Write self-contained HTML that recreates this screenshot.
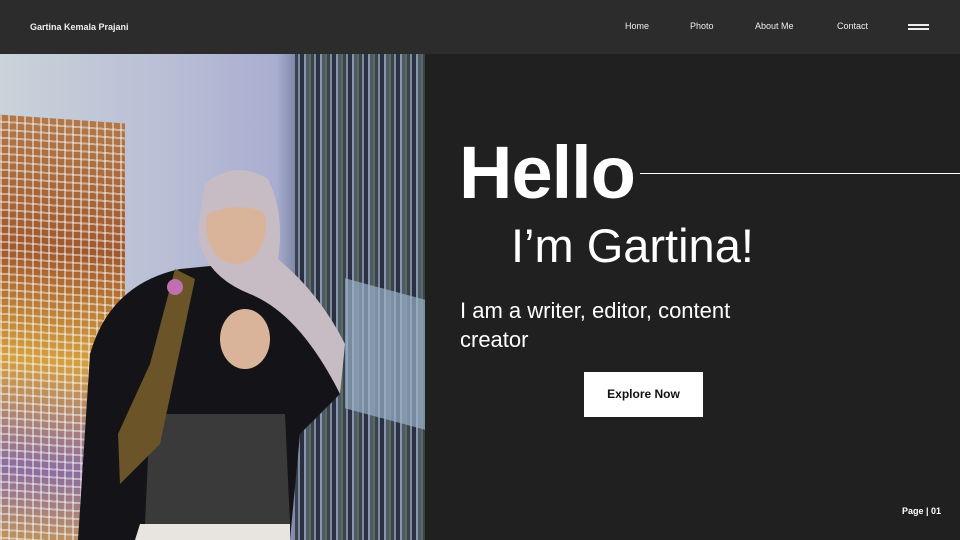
<!DOCTYPE html><html><head><style>
*{margin:0;padding:0;box-sizing:border-box}
body{width:960px;height:540px;overflow:hidden;background:#202020;font-family:"Liberation Sans",sans-serif;position:relative}
.hdr{position:absolute;left:0;top:0;width:960px;height:54px;background:#2c2c2c;color:#eee}
.hdr span{position:absolute;top:21px;font-size:9px}
.photo{position:absolute;left:0;top:54px;width:425px;height:486px;overflow:hidden;background:linear-gradient(90deg,#c9d3d8 0%,#b9bed6 40%,#a9aed0 65%,#6a7390 72%,#4a5068 100%)}
.mosaic{position:absolute;left:0;top:65px;width:125px;height:440px;transform:skewY(4deg);
background:repeating-linear-gradient(90deg,rgba(255,255,255,.45) 0 2px,transparent 2px 8px),repeating-linear-gradient(0deg,rgba(255,255,255,.45) 0 2px,transparent 2px 8px),
linear-gradient(180deg,#b0784a,#a0582e 30%,#d4a040 55%,#8b6ca0 80%,#c89a50)}
.streak{position:absolute;left:295px;top:0;width:130px;height:486px;background:repeating-linear-gradient(90deg,#3a4250 0 3px,#7c8aa0 3px 5px,#2a3040 5px 9px,#8a96a8 9px 11px,#4a5a6c 11px 14px,#5c6a58 14px 16px)}
</style></head><body>
<div class="hdr"><span style="left:30px;font-weight:bold;top:22px;font-size:9px">Gartina Kemala Prajani</span>
<span style="left:625px">Home</span><span style="left:690px">Photo</span><span style="left:755px">About Me</span><span style="left:837px">Contact</span>
<div style="position:absolute;left:908px;top:24px;width:21px;height:2px;background:#eee"></div>
<div style="position:absolute;left:908px;top:28px;width:21px;height:2px;background:#eee"></div></div>
<div class="photo">
<div class="mosaic"></div>
<div class="streak"></div>
<div style="position:absolute;left:345px;top:235px;width:80px;height:130px;background:#9ab0c8;transform:skewY(15deg);opacity:.7"></div>
<svg width="425" height="486" style="position:absolute;left:0;top:0">
<path d="M78 486 L90 300 Q110 230 180 215 L230 210 Q300 230 330 270 L340 340 L300 380 L290 486Z" fill="#141418"/>
<path d="M205 130 Q235 105 268 125 Q285 160 278 205 Q320 240 345 290 L340 340 Q300 260 250 240 Q200 220 198 175Z" fill="#c8bcc4"/>
<ellipse cx="236" cy="172" rx="30" ry="38" fill="#d9b49a"/>
<path d="M205 150 Q232 118 270 138 L268 160 Q235 145 205 162Z" fill="#c8bcc4"/>
<path d="M150 360 L285 360 L290 470 L145 470Z" fill="#3a3a3a"/>
<path d="M140 470 L290 470 L290 486 L135 486Z" fill="#e8e4e0"/>
<path d="M175 215 L195 225 L160 390 L120 430 L118 380 L150 310Z" fill="#6a5428"/>
<ellipse cx="245" cy="285" rx="25" ry="30" fill="#d9b49a"/>
<circle cx="175" cy="233" r="8" fill="#c070b0"/>
</svg></div>
<div style="position:absolute;left:459px;top:133px;color:#fff;font-weight:bold;font-size:74px;letter-spacing:-1px;line-height:80px">Hello</div>
<div style="position:absolute;left:640px;top:173px;width:320px;height:1px;background:#fff"></div>
<div style="position:absolute;left:511px;top:218px;color:#fff;font-size:47px;line-height:56px">I’m Gartina!</div>
<div style="position:absolute;left:460px;top:296px;color:#fff;font-size:22px;line-height:29px;width:300px">I am a writer, editor, content creator</div>
<div style="position:absolute;left:584px;top:372px;width:119px;height:45px;background:#fff;color:#111;font-weight:bold;font-size:12px;text-align:center;line-height:45px">Explore Now</div>
<div style="position:absolute;left:902px;top:506px;color:#fff;font-weight:bold;font-size:9px">Page | 01</div>
</body></html>
